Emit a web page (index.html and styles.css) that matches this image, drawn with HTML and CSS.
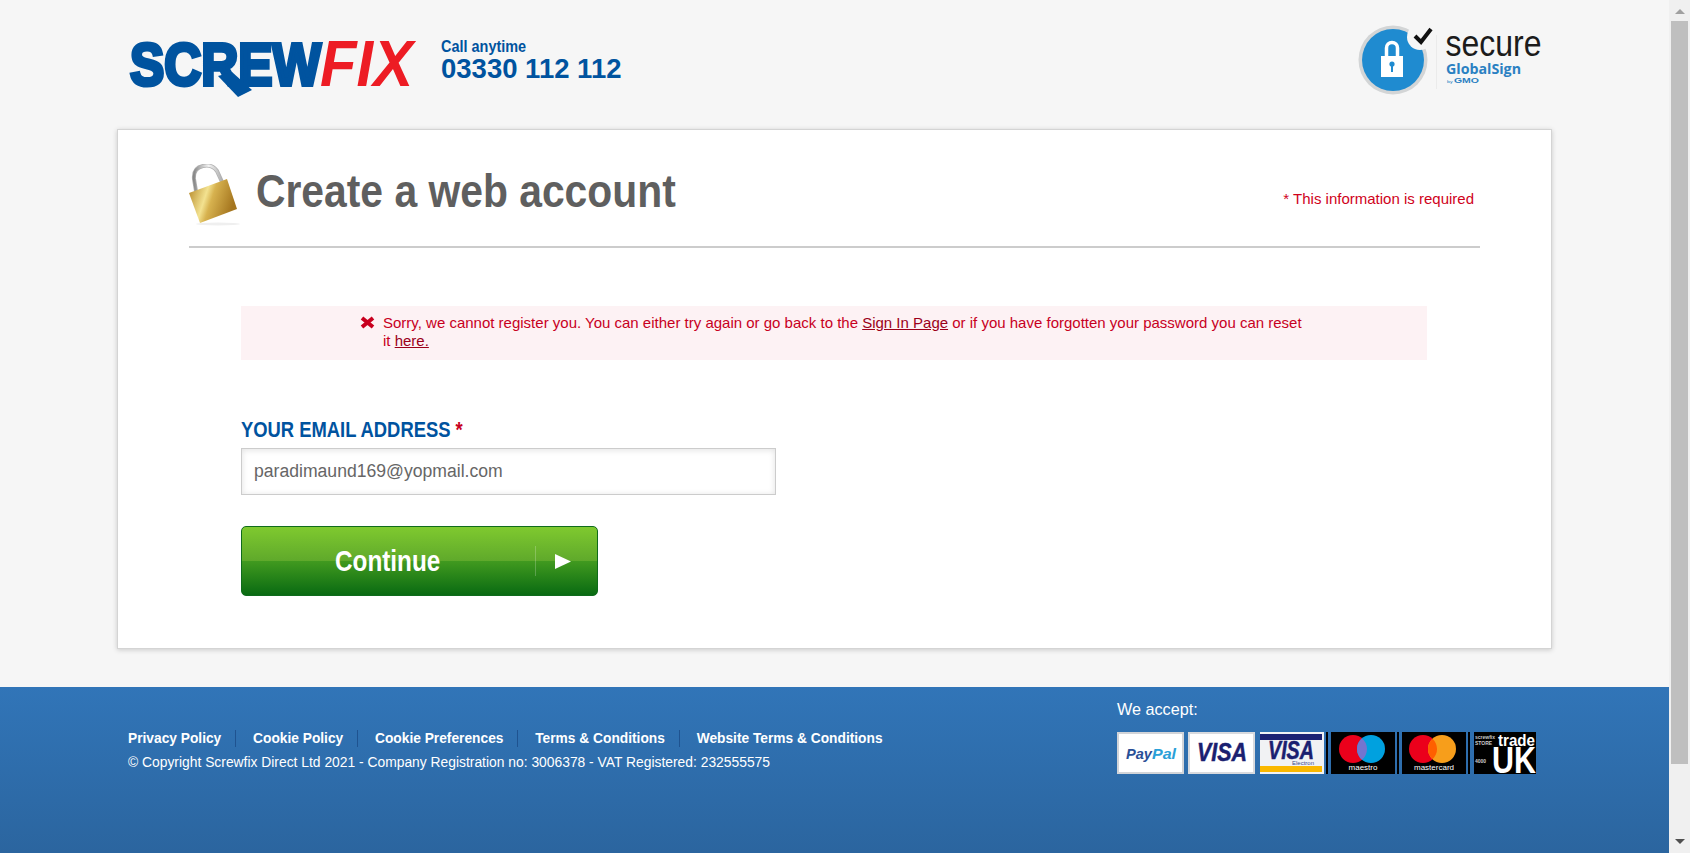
FILE: index.html
```html
<!DOCTYPE html>
<html lang="en">
<head>
<meta charset="utf-8">
<title>Create a web account - Screwfix</title>
<link rel="stylesheet" href="styles.css">
</head>
<body>
<div class="page">
  <header class="top">
    <div class="brand">
      <svg class="logo" width="290" height="62" viewBox="0 0 290 62" role="img" aria-label="Screwfix">
        <text class="logo-blue" x="2" y="46.500" textLength="191" lengthAdjust="spacingAndGlyphs">SCREW</text>
        <polygon class="logo-fill" points="90,38 110,59 124,52 104,34"/>
        <text class="logo-red" x="192" y="48" textLength="93" lengthAdjust="spacingAndGlyphs">FIX</text>
      </svg>
      <div class="contact">
        <div class="call">Call anytime</div>
        <div class="phone">03330 112 112</div>
      </div>
    </div>
    <svg class="secure" width="186" height="72" viewBox="0 0 186 72" role="img" aria-label="Secure GlobalSign by GMO">
      <circle cx="36" cy="37" r="34.500" fill="#d3d5d6"/>
      <circle cx="36" cy="37" r="31" fill="#1f8bd0"/>
      <circle cx="63" cy="14" r="13" fill="#f6f6f6"/>
      <path d="M29.500 34v-9a5.500 5.500 0 0 1 11 0v9" fill="none" stroke="#fff" stroke-width="3.500"/>
      <rect x="24" y="33" width="22" height="21" fill="#fff"/>
      <circle cx="35" cy="41" r="2.600" fill="#1f8bd0"/>
      <rect x="34" y="42" width="2" height="7" fill="#1f8bd0"/>
      <path d="M58 13l6 6L74 6" fill="none" stroke="#111" stroke-width="4"/>
      <line x1="79.500" y1="12" x2="79.500" y2="66" stroke="#ebebeb"/>
      <text class="s-word" x="88.500" y="33" textLength="96" lengthAdjust="spacingAndGlyphs">secure</text>
      <text class="s-global" x="89" y="50.500" textLength="75" lengthAdjust="spacingAndGlyphs">GlobalSign</text>
      <text class="s-by" x="90" y="60" textLength="32" lengthAdjust="spacingAndGlyphs">by <tspan class="s-gmo">GMO</tspan></text>
    </svg>
  </header>

  <main class="card">
    <div class="heading">
      <svg class="padlock" width="52" height="62" viewBox="0 0 52 62" aria-hidden="true">
        <defs>
          <linearGradient id="gold" x1="0" y1="0" x2="1" y2="0.3">
            <stop offset="0" stop-color="#b0801f"/>
            <stop offset=".42" stop-color="#f3e290"/>
            <stop offset=".56" stop-color="#d7b24f"/>
            <stop offset="1" stop-color="#a5761f"/>
          </linearGradient>
          <linearGradient id="steel" x1="0" y1="0" x2="1" y2="0">
            <stop offset="0" stop-color="#888"/>
            <stop offset=".5" stop-color="#f4f4f4"/>
            <stop offset="1" stop-color="#aaa"/>
          </linearGradient>
        </defs>
        <ellipse cx="30" cy="60" rx="22" ry="1.500" fill="#efefef"/>
        <path d="M8 27L6 15Q5 4 15 2Q24 0 29 7L35 20" fill="none" stroke="#b0b0b0" stroke-width="4"/>
        <path d="M8 27L6 15Q5 4 15 2Q24 0 29 7L35 20" fill="none" stroke="url(#steel)" stroke-width="2.500"/>
        <polygon points="1,29 39,15 49,45 12,59" fill="url(#gold)"/>
      </svg>
      <h1 class="title">Create a web account</h1>
      <p class="required">* This information is required</p>
    </div>

    <section class="form-area">
      <div class="error">
        <svg class="error-icon" width="15" height="13" viewBox="0 0 15 13" aria-hidden="true">
          <path d="M2 2l11 9M13 2L2 11" fill="none" stroke="#c8001e" stroke-width="4"/>
        </svg>
        <p class="error-text">Sorry, we cannot register you. You can either try again or go back to the <a href="#">Sign In Page</a> or if you have forgotten your password you can reset it <a href="#">here.</a></p>
      </div>

      <form class="signup">
        <label class="field-label" for="email">YOUR EMAIL ADDRESS <span class="star">*</span></label>
        <input class="field" id="email" type="text" value="paradimaund169@yopmail.com">
        <button class="continue" type="button">
          <span class="continue-label">Continue</span>
          <span class="continue-arrow"><svg width="16" height="15" viewBox="0 0 16 15" aria-hidden="true"><polygon points="0,0 16,7.500 0,15" fill="#fff"/></svg></span>
        </button>
      </form>
    </section>
  </main>

  <footer class="foot">
    <div class="foot-left">
      <nav class="links">
        <a href="#">Privacy Policy</a>
        <a href="#">Cookie Policy</a>
        <a href="#">Cookie Preferences</a>
        <a href="#">Terms &amp; Conditions</a>
        <a href="#">Website Terms &amp; Conditions</a>
      </nav>
      <p class="copy">© Copyright Screwfix Direct Ltd 2021 - Company Registration no: 3006378 - VAT Registered: 232555575</p>
    </div>
    <div class="foot-right">
      <div class="accept">We accept:</div>
      <svg class="cards" width="420" height="42" viewBox="0 0 420 42" role="img" aria-label="Accepted payment cards">
        <rect x="1" y="1" width="65" height="40" fill="#fff" stroke="#d2d4d8" stroke-width="2"/>
        <text class="c-pay" x="9" y="27" textLength="26" lengthAdjust="spacingAndGlyphs">Pay</text>
        <text class="c-pal" x="35" y="27" textLength="24" lengthAdjust="spacingAndGlyphs">Pal</text>

        <rect x="72" y="1" width="65" height="40" fill="#fff" stroke="#d8dade" stroke-width="2"/>
        <text class="c-visa" x="80" y="29" textLength="50" lengthAdjust="spacingAndGlyphs">VISA</text>

        <rect x="143" y="0" width="64" height="42" fill="#f1f2f4"/>
        <rect x="143" y="2" width="62" height="6" fill="#1c2273"/>
        <rect x="143" y="34" width="62" height="6" fill="#fab800"/>
        <text class="c-visa" x="151" y="27" textLength="46" lengthAdjust="spacingAndGlyphs">VISA</text>
        <text class="c-elec" x="175" y="33" textLength="22" lengthAdjust="spacingAndGlyphs">Electron</text>

        <rect x="209" y="0" width="2" height="42" fill="#000"/>
        <rect x="214" y="0" width="64" height="42" fill="#000"/>
        <circle cx="236" cy="17" r="14" fill="#eb001b"/>
        <circle cx="254" cy="17" r="14" fill="#00a1df"/>
        <path d="M245 6.300a14 14 0 0 1 0 21.400a14 14 0 0 1 0-21.400z" fill="#7375cf"/>
        <text class="c-small" x="246" y="38" text-anchor="middle">maestro</text>

        <rect x="280" y="0" width="2" height="42" fill="#000"/>
        <rect x="285" y="0" width="64" height="42" fill="#000"/>
        <circle cx="306" cy="17" r="14" fill="#eb001b"/>
        <circle cx="325" cy="17" r="14" fill="#f79e1b"/>
        <path d="M315.500 6.700a14 14 0 0 1 0 20.600a14 14 0 0 1 0-20.600z" fill="#ff5f00"/>
        <text class="c-small" x="317" y="38" text-anchor="middle">mastercard</text>

        <rect x="351" y="0" width="2" height="42" fill="#000"/>
        <rect x="357" y="0" width="62" height="42" fill="#000"/>
        <text class="c-trade" x="381" y="14" textLength="37" lengthAdjust="spacingAndGlyphs">trade</text>
        <text class="c-uk" x="375" y="41" textLength="44" lengthAdjust="spacingAndGlyphs">UK</text>
        <text class="c-tiny" x="358" y="7">screwfix</text>
        <text class="c-tiny" x="358" y="13">STORE</text>
        <text class="c-tiny" x="358" y="31">4000</text>
      </svg>
    </div>
  </footer>
</div>

<aside class="scrollbar" aria-hidden="true">
  <div class="arrow arrow-up"></div>
  <div class="thumb"></div>
  <div class="arrow arrow-down"></div>
</aside>
</body>
</html>
```
FILE: styles.css
```css
* { box-sizing: border-box; }

html, body {
  margin: 0;
  height: 853px;
  overflow: hidden;
}

body {
  display: flex;
  font-family: "Liberation Sans", Arial, sans-serif;
  background: #f6f6f6;
}

.page {
  width: 1669px;
  height: 853px;
  display: flex;
  flex-direction: column;
  flex: none;
}

/* Header */
.top {
  height: 129px;
  flex: none;
  display: flex;
  justify-content: space-between;
  padding: 23px 126px 0 128px;
}

.brand {
  display: flex;
  align-items: flex-start;
}

.logo {
  margin-top: 15px;
  flex: none;
  overflow: visible;
}

.logo-blue {
  font: bold 60px "Liberation Sans", sans-serif;
  fill: #00539f;
  stroke: #00539f;
  stroke-width: 4px;
}

.logo-fill { fill: #00539f; }

.logo-red {
  font: italic bold 64px "Liberation Sans", sans-serif;
  fill: #ed1c24;
}

.contact {
  margin: 14px 0 0 23px;
  color: #00539f;
}

.call {
  font: bold 17px/20px "Liberation Sans", sans-serif;
  transform: scaleX(.85);
  transform-origin: left center;
}

.phone {
  font: bold 27.5px/30px "Liberation Sans", sans-serif;
  margin-top: -3px;
}

.secure {
  flex: none;
  overflow: visible;
}

.s-word {
  font: 37px "Liberation Sans", sans-serif;
  fill: #1c1c1c;
}

.s-global {
  font: bold 15px "Open Sans", "Liberation Sans", sans-serif;
  fill: #2a80c2;
}

.s-by {
  font: 4px "Liberation Sans", sans-serif;
  fill: #2a80c2;
}

.s-gmo {
  font: bold 8px "Liberation Sans", sans-serif;
}

/* Card */
.card {
  flex: none;
  width: 1435px;
  height: 520px;
  margin-left: 117px;
  padding: 0 71px;
  background: #fff;
  border: 1px solid #d4d4d4;
  box-shadow: 0 1px 5px rgba(0, 0, 0, .18);
}

.heading {
  height: 118px;
  display: flex;
  align-items: flex-start;
  border-bottom: 2px solid #ccc;
  padding-top: 34px;
}

.padlock {
  flex: none;
  margin-left: -1px;
}

.title {
  margin: -2px 0 0 16px;
  font: bold 46px/58px "Liberation Sans", sans-serif;
  color: #5f5f5f;
  transform: scaleX(.8875);
  transform-origin: left center;
}

.required {
  margin: 26px 6px 0 auto;
  font-size: 15px;
  line-height: 18px;
  color: #d0021b;
}

.form-area {
  margin: 58px 0 0 52px;
  width: 1186px;
}

.error {
  height: 54px;
  background: #fdf2f4;
  display: flex;
  align-items: flex-start;
  padding: 8px 0 0 119px;
}

.error-icon {
  flex: none;
  margin: 2px 8px 0 0;
}

.error-text {
  margin: 0;
  width: 925px;
  font-size: 15px;
  line-height: 18px;
  color: #c8001e;
}

.error-text a { color: #9b0019; }

.signup {
  display: flex;
  flex-direction: column;
  align-items: flex-start;
  margin-top: 57px;
}

.field-label {
  font: bold 22px/26px "Liberation Sans", sans-serif;
  color: #00539f;
  transform: scaleX(.836);
  transform-origin: left center;
}

.star { color: #c8001e; }

.field {
  width: 535px;
  height: 47px;
  margin-top: 5px;
  padding: 0 12px;
  border: 1px solid #ccc;
  outline: 0;
  background: #fff;
  box-shadow: inset 0 1px 6px rgba(0, 0, 0, .12);
  font: 17.6px "Liberation Sans", sans-serif;
  color: #666;
}

.continue {
  width: 357px;
  height: 70px;
  margin-top: 31px;
  padding: 0;
  display: flex;
  align-items: center;
  border: 1px solid #0f6b1c;
  border-radius: 5px;
  background: linear-gradient(#7fc92f 0, #5fa92b 50%, #419a1f 50%, #096a12 100%);
  color: #fff;
}

.continue-label {
  flex: 1;
  text-align: center;
  padding-right: 2px;
  font: bold 30px/40px "Liberation Sans", sans-serif;
  transform: scaleX(.81);
}

.continue-arrow {
  flex: none;
  width: 62px;
  height: 30px;
  display: flex;
  align-items: center;
  padding-left: 19px;
  border-left: 1px solid rgba(255, 255, 255, .22);
}

/* Footer */
.foot {
  flex: none;
  height: 166px;
  margin-top: 38px;
  display: flex;
  justify-content: space-between;
  padding: 0 132px 0 128px;
  background: linear-gradient(#3175b8, #2b659f);
  color: #fff;
}

.foot-left { padding-top: 43px; }

.links {
  display: flex;
  height: 17px;
}

.links a {
  color: #fff;
  text-decoration: none;
  font-size: 13.75px;
  font-weight: bold;
  line-height: 17px;
  padding-right: 14px;
  margin-right: 16.8px;
  border-right: 1px solid #1f5390;
}

.links a:last-child {
  border-right: 0;
  margin-right: 0;
  padding-right: 0;
}

.copy {
  margin: 7px 0 0;
  font-size: 13.85px;
  line-height: 16px;
}

.foot-right { padding-top: 13px; }

.accept {
  font-size: 16.2px;
  line-height: 18px;
  margin-bottom: 14px;
}

.cards {
  display: block;
  overflow: visible;
}

.c-pay, .c-pal {
  font: italic bold 15px "Liberation Sans", sans-serif;
}
.c-pay { fill: #2a4f97; }
.c-pal { fill: #2aa0d8; }

.c-visa {
  font: italic bold 26px "Liberation Sans", sans-serif;
  fill: #1a2070;
  stroke: #1a2070;
  stroke-width: .5px;
}

.c-elec {
  font: 6px "Liberation Sans", sans-serif;
  fill: #3b4a8c;
}

.c-small {
  font: 8px "Liberation Sans", sans-serif;
  fill: #fff;
}

.c-trade {
  font: bold 16px "Liberation Sans", sans-serif;
  fill: #fff;
}

.c-uk {
  font: bold 36px "Liberation Sans", sans-serif;
  fill: #fff;
}

.c-tiny {
  font: bold 5px "Liberation Sans", sans-serif;
  fill: #ccc;
}

/* Scrollbar */
.scrollbar {
  flex: none;
  width: 21px;
  height: 853px;
  background: #f0f0f0;
  display: flex;
  flex-direction: column;
  align-items: center;
}

.arrow {
  flex: none;
  width: 0;
  height: 0;
  border-left: 5px solid transparent;
  border-right: 5px solid transparent;
}

.arrow-up {
  border-bottom: 5px solid #a0a0a0;
  margin-top: 9px;
}

.thumb {
  flex: none;
  width: 17px;
  height: 743px;
  margin-top: 7px;
  background: #bfbfbf;
}

.arrow-down {
  border-top: 5px solid #505050;
  margin-top: 75px;
}
```
